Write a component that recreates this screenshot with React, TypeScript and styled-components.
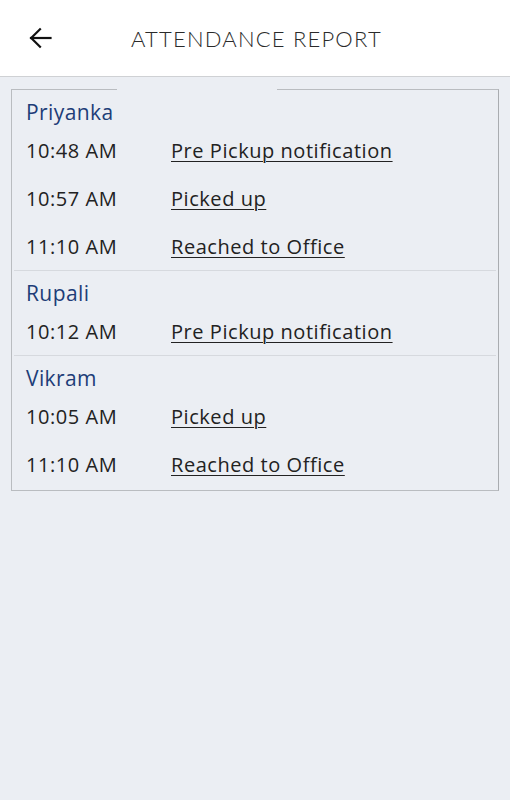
import React from 'react';
import styled, { createGlobalStyle } from 'styled-components';

interface Entry {
  time: string;
  event: string;
}

interface Person {
  name: string;
  entries: Entry[];
}

const report: Person[] = [
  {
    name: 'Priyanka',
    entries: [
      { time: '10:48 AM', event: 'Pre Pickup notification' },
      { time: '10:57 AM', event: 'Picked up' },
      { time: '11:10 AM', event: 'Reached to Office' },
    ],
  },
  {
    name: 'Rupali',
    entries: [{ time: '10:12 AM', event: 'Pre Pickup notification' }],
  },
  {
    name: 'Vikram',
    entries: [
      { time: '10:05 AM', event: 'Picked up' },
      { time: '11:10 AM', event: 'Reached to Office' },
    ],
  },
];

const App: React.FC = () => {
  return (
    <Page>
      <GlobalStyle />
      <Header>
        <BackButton aria-label="Back">
          <svg width="24" height="24" viewBox="0 0 24 24" fill="none" stroke="currentColor" strokeWidth={2.2} strokeLinecap="square">
            <path d="M22.5 12H3" />
            <path d="M12 3.2 3.2 12 12 20.8" />
          </svg>
        </BackButton>
        <Title>ATTENDANCE REPORT</Title>
      </Header>
      <Content>
        <ReportBox>
          <Gap />
          {report.map((person, i) => (
            <Group key={person.name} $first={i === 0}>
              <Name>{person.name}</Name>
              {person.entries.map((entry) => (
                <Row key={entry.time + entry.event}>
                  <Time>{entry.time}</Time>
                  <EventLink href="#">{entry.event}</EventLink>
                </Row>
              ))}
            </Group>
          ))}
        </ReportBox>
      </Content>
    </Page>
  );
};

const GlobalStyle = createGlobalStyle`
  html, body {
    margin: 0;
    padding: 0;
    background: #ebeef3;
  }
  body {
    font-family: "Open Sans", Lato, sans-serif;
    color: #222;
  }
`;

const Page = styled.div`
  min-height: 800px;
  background: #ebeef3;
`;

const Header = styled.div`
  height: 77px;
  background: #fff;
  border-bottom: 1px solid #cfd1d4;
  display: flex;
  align-items: center;
  padding: 0 0 0 28px;
  box-sizing: border-box;
`;

const BackButton = styled.button`
  background: transparent;
  border: none;
  padding: 0;
  width: 24px;
  height: 24px;
  color: #111;
  display: flex;
  align-items: center;
  justify-content: center;
  cursor: pointer;
`;

const Title = styled.h1`
  margin: 0 0 0 79px;
  font-family: Lato, "Open Sans", sans-serif;
  font-weight: 300;
  font-size: 22px;
  letter-spacing: 1.2px;
  color: #2a2a2a;
`;

const Content = styled.div`
  padding: 12px 11px;
`;

const ReportBox = styled.fieldset`
  margin: 0;
  padding: 0 2px 2px;
  border: 1px solid #b9bcc0;
  border-right-color: #a9acb0;
  min-width: 0;
`;

const Gap = styled.legend`
  width: 160px;
  height: 0;
  padding: 0;
  margin-left: 103px;
  line-height: 0;
`;

const Group = styled.div<{ $first: boolean }>`
  border-top: ${(p) => (p.$first ? 'none' : '1px solid #d6d9de')};
  padding: 0 0 0 12px;
`;

const Name = styled.div`
  height: 36px;
  padding-top: 8px;
  box-sizing: border-box;
  line-height: 28px;
  font-size: 21px;
  letter-spacing: 0.4px;
  color: #1d3d78;
`;

const Row = styled.div`
  display: grid;
  grid-template-columns: 145px 1fr;
  align-items: center;
  height: 48px;
  font-size: 20px;
  letter-spacing: 0.55px;
`;

const Time = styled.span`
  color: #222;
`;

const EventLink = styled.a`
  color: #222;
  text-decoration: underline;
  text-underline-offset: 3px;
  text-decoration-thickness: 1px;
`;

export default App;
